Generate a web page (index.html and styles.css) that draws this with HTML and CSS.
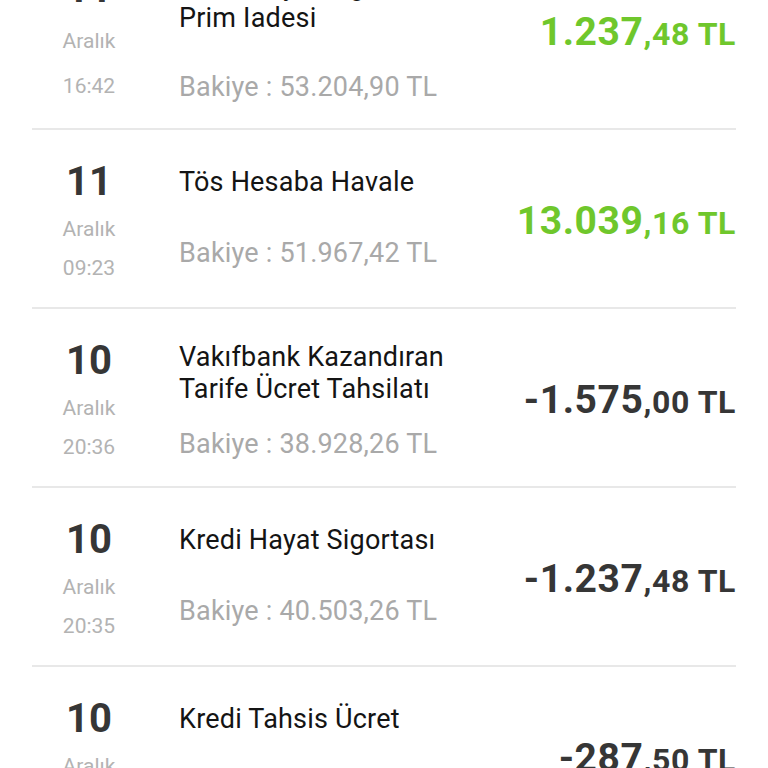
FILE: index.html
```html
<!DOCTYPE html>
<html lang="tr">
<head>
<meta charset="utf-8">
<title>Hesap Hareketleri</title>
<link rel="stylesheet" href="styles.css">
</head>
<body>
<ul class="list">
  <li class="row row--first">
    <div class="date">
      <div class="day">11</div>
      <div class="month">Aralık</div>
      <div class="time">16:42</div>
    </div>
    <div class="info">
      <div class="title">Kredi Hayat Sigortası<br>Prim Iadesi</div>
      <div class="balance">Bakiye : 53.204,90 TL</div>
    </div>
    <div class="amount amount--in"><span class="int">1.237</span><span class="dec">,48 TL</span></div>
  </li>
  <li class="row">
    <div class="date">
      <div class="day">11</div>
      <div class="month">Aralık</div>
      <div class="time">09:23</div>
    </div>
    <div class="info">
      <div class="title">Tös Hesaba Havale</div>
      <div class="balance">Bakiye : 51.967,42 TL</div>
    </div>
    <div class="amount amount--in"><span class="int">13.039</span><span class="dec">,16 TL</span></div>
  </li>
  <li class="row row--wrap">
    <div class="date">
      <div class="day">10</div>
      <div class="month">Aralık</div>
      <div class="time">20:36</div>
    </div>
    <div class="info">
      <div class="title">Vakıfbank Kazandıran Tarife Ücret Tahsilatı</div>
      <div class="balance">Bakiye : 38.928,26 TL</div>
    </div>
    <div class="amount"><span class="int">-1.575</span><span class="dec">,00 TL</span></div>
  </li>
  <li class="row">
    <div class="date">
      <div class="day">10</div>
      <div class="month">Aralık</div>
      <div class="time">20:35</div>
    </div>
    <div class="info">
      <div class="title">Kredi Hayat Sigortası</div>
      <div class="balance">Bakiye : 40.503,26 TL</div>
    </div>
    <div class="amount"><span class="int">-1.237</span><span class="dec">,48 TL</span></div>
  </li>
  <li class="row">
    <div class="date">
      <div class="day">10</div>
      <div class="month">Aralık</div>
      <div class="time">20:34</div>
    </div>
    <div class="info">
      <div class="title">Kredi Tahsis Ücret</div>
      <div class="balance">Bakiye : 41.740,74 TL</div>
    </div>
    <div class="amount"><span class="int">-287</span><span class="dec">,50 TL</span></div>
  </li>
</ul>
</body>
</html>
```

FILE: styles.css
```css
html, body {
  margin: 0;
  padding: 0;
  background: #ffffff;
  height: 768px;
  overflow: hidden;
}

body {
  font-family: Roboto, "Noto Sans", "Liberation Sans", sans-serif;
}

.list {
  list-style: none;
  margin: -49px 32px 0 32px;
  padding: 0;
}

.row {
  display: flex;
  height: 177px;
  border-bottom: 2px solid #e8e8e8;
}

.date {
  width: 114px;
  flex: none;
  text-align: center;
  padding-top: 24px;
}

.day {
  font-size: 40px;
  font-weight: 700;
  line-height: 56px;
  color: #363636;
}

.month,
.time {
  font-size: 21px;
  line-height: 39px;
  color: #b3b3b3;
}

.info {
  flex: 1;
  min-width: 0;
  padding-left: 33px;
  padding-right: 16px;
  padding-top: 36px;
}

.title {
  font-size: 27px;
  line-height: 32px;
  letter-spacing: 0.2px;
  color: #141414;
}

.balance {
  margin-top: 39px;
  font-size: 27px;
  line-height: 32px;
  letter-spacing: 0.2px;
  color: #a9a9a9;
}

.amount {
  flex: none;
  align-self: center;
  padding-top: 4px;
  color: #363636;
  font-weight: 700;
  white-space: nowrap;
  letter-spacing: 0.6px;
}

.amount--in {
  color: #6fc72c;
}

.int {
  font-size: 39px;
}

.dec {
  font-size: 32px;
}

/* two-line title rows */
.row--wrap .info {
  padding-top: 32px;
}

.row--wrap .balance {
  margin-top: 23px;
}

/* partially scrolled-off first row */
.row--first .date {
  padding-top: 10px;
}

.row--first .month {
  margin-top: 5px;
}

.row--first .time {
  margin-top: 6px;
}

.row--first .info {
  padding-top: 19px;
}

.row--first .balance {
  margin-top: 37px;
}

.row--first .amount {
  padding-top: 0;
  padding-bottom: 15px;
}
```
